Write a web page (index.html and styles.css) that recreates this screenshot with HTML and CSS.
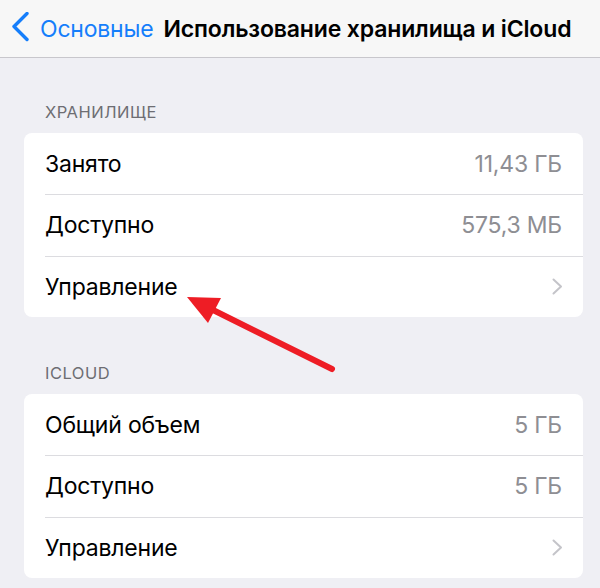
FILE: index.html
```html
<!DOCTYPE html>
<html lang="ru">
<head>
<meta charset="utf-8">
<link rel="stylesheet" href="styles.css">
</head>
<body>
<header class="nav">
  <svg class="back-icon" width="20" height="30" viewBox="0 0 20 30"><polyline points="16,1.5 3,14.5 16,27.5" fill="none" stroke="#157efb" stroke-width="3.4" stroke-linecap="round" stroke-linejoin="round"/></svg>
  <span class="back-text">Основные</span>
  <span class="title">Использование хранилища и iCloud</span>
</header>
<main class="content">
  <div class="section-header first">Хранилище</div>
  <div class="card">
    <div class="row"><span class="label">Занято</span><span class="value">11,43 ГБ</span></div>
    <div class="row"><span class="label">Доступно</span><span class="value">575,3 МБ</span></div>
    <div class="row"><span class="label">Управление</span><svg class="chev" width="11" height="17" viewBox="0 0 11 17"><polyline points="1.5,1.5 9,8.5 1.5,15.5" fill="none" stroke="#c4c4c9" stroke-width="2" stroke-linecap="round" stroke-linejoin="round"/></svg></div>
  </div>
  <div class="section-header">iCloud</div>
  <div class="card">
    <div class="row"><span class="label">Общий объем</span><span class="value">5 ГБ</span></div>
    <div class="row"><span class="label">Доступно</span><span class="value">5 ГБ</span></div>
    <div class="row"><span class="label">Управление</span><svg class="chev" width="11" height="17" viewBox="0 0 11 17"><polyline points="1.5,1.5 9,8.5 1.5,15.5" fill="none" stroke="#c4c4c9" stroke-width="2" stroke-linecap="round" stroke-linejoin="round"/></svg></div>
  </div>
</main>
<svg class="arrow" width="600" height="588" viewBox="0 0 600 588">
  <line x1="332" y1="369" x2="205" y2="306" stroke="#ee1d25" stroke-width="6" stroke-linecap="round"/>
  <polygon points="187,297 221,298 208,323" fill="#ee1d25"/>
</svg>
</body>
</html>
```
FILE: styles.css
```css
html, body {
  margin: 0;
  padding: 0;
}
body {
  background: #efeff4;
  font-family: Inter, "Noto Sans", sans-serif;
  width: 600px;
  height: 588px;
  overflow: hidden;
  position: relative;
}
.nav {
  height: 57px;
  background: #f7f7f7;
  border-bottom: 1px solid #c8c7cc;
  display: flex;
  align-items: center;
  padding-left: 11px;
  box-sizing: content-box;
}
.back-icon {
  display: block;
  margin-top: -3px;
}
.back-text {
  font-size: 23px;
  color: #157efb;
  margin-left: 9px;
  letter-spacing: -0.2px;
}
.title {
  font-size: 23px;
  font-weight: 600;
  color: #000;
  margin-left: 10px;
  letter-spacing: -0.15px;
}
.content {
  display: flex;
  flex-direction: column;
}
.section-header {
  font-size: 16.5px;
  line-height: 20px;
  color: #6d6d72;
  text-transform: uppercase;
  letter-spacing: 0.5px;
  padding-left: 45px;
  margin-top: 46px;
  margin-bottom: 11px;
}
.section-header.first {
  margin-top: 44px;
}
.card {
  background: #fff;
  margin: 0 17px 0 24px;
  border-radius: 8px;
  padding-left: 21px;
}
.row {
  height: 61.33px;
  box-sizing: border-box;
  display: flex;
  align-items: center;
  justify-content: space-between;
  padding-right: 21px;
  font-size: 23px;
}
.row + .row {
  border-top: 1px solid #dcdce0;
}
.label {
  color: #000;
  letter-spacing: -0.2px;
}
.value {
  color: #8e8e93;
  letter-spacing: -0.2px;
}
.chev {
  display: block;
  margin-right: -1px;
}
.arrow {
  position: absolute;
  left: 0;
  top: 0;
  pointer-events: none;
}
```
